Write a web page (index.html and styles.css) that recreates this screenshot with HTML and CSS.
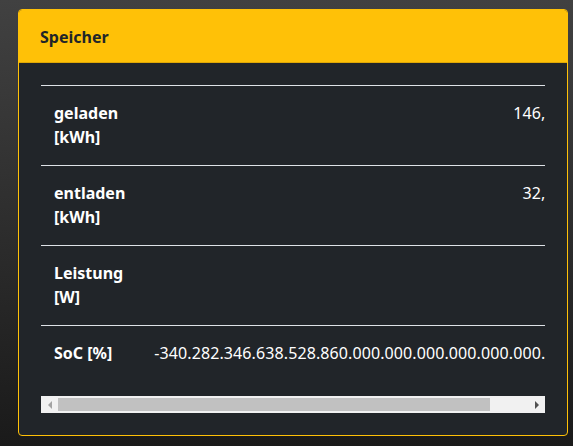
FILE: index.html
```html
<!DOCTYPE html>
<html lang="de">

<head>
    <meta charset="UTF-8">
    <meta name="viewport" content="width=device-width, initial-scale=1.0">
    <title>Speicher</title>

    <link rel="stylesheet" href="styles.css">
</head>

<body>

    <div class="card">
        <div class="card-header">Speicher</div>
        <div class="card-body">
            <div class="table-wrap">
                <table>
                    <tbody>
                        <tr><th>geladen [kWh]</th><td>146,585</td></tr>
                        <tr><th>entladen [kWh]</th><td>32,961</td></tr>
                        <tr><th>Leistung [W]</th><td></td></tr>
                        <tr><th>SoC [%]</th><td>-340.282.346.638.528.860.000.000.000.000.000.000.000</td></tr>
                    </tbody>
                </table>
            </div>
            <div class="scrollbar">
                <span class="arrow left"></span>
                <div class="track"><div class="thumb"></div></div>
                <span class="arrow right"></span>
            </div>
        </div>
    </div>

</body>
</html>
```

FILE: styles.css
```css
html {
    height: 100%;
}

body {
    font-family: "Noto Sans", "Open Sans", sans-serif;
    font-size: 16px;
    line-height: 24px;
    margin: 0;
    padding: 9px 5px 0 18px;
    min-height: 100%;
    box-sizing: border-box;
    background: linear-gradient(to bottom, #414141, #1a1a1a);
    color: white;
}

.card {
    width: 550px;
    box-sizing: border-box;
    border: 1px solid #ffc107;
    border-radius: 4px;
    background: #212529;
    overflow: hidden;
}

.card-header {
    background: #ffc107;
    color: #212529;
    font-weight: bold;
    padding: 15px 21px 13px;
    border-bottom: 1px solid rgba(0, 0, 0, 0.125);
}

.card-body {
    padding: 22px;
}

.table-wrap {
    overflow: hidden;
}

table {
    border-collapse: collapse;
    white-space: nowrap;
}

th, td {
    border-top: 1px solid #dee2e6;
    padding: 15px 20px 16px 12px;
    text-align: right;
    vertical-align: top;
    letter-spacing: 0.1px;
}

th {
    text-align: left;
    font-weight: bold;
    white-space: normal;
    letter-spacing: 0;
    padding-left: 13px;
    padding-right: 17px;
}

.scrollbar {
    display: flex;
    align-items: center;
    height: 17px;
    margin-top: 15px;
    background: #f1f1f1;
}

.track {
    flex: 1;
    height: 13px;
}

.thumb {
    width: 432px;
    height: 100%;
    background: #c1c1c1;
}

.arrow {
    width: 17px;
    height: 17px;
    display: flex;
    align-items: center;
    justify-content: center;
}

.arrow::before {
    content: "";
    border-top: 4px solid transparent;
    border-bottom: 4px solid transparent;
}

.arrow.left::before {
    border-right: 4px solid #a3a3a3;
}

.arrow.right::before {
    border-left: 4px solid #505050;
}
```
